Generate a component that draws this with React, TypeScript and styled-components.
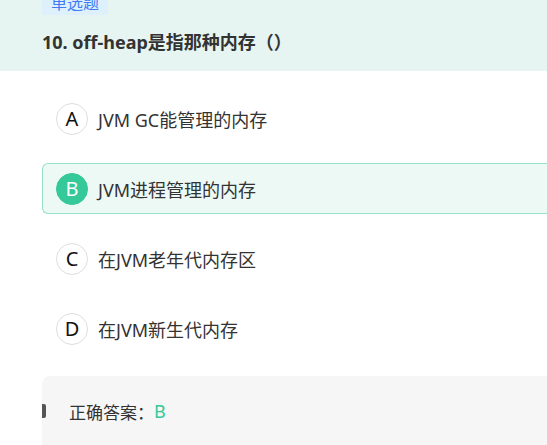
import React from "react";
import styled, { createGlobalStyle } from "styled-components";

const Global = createGlobalStyle`
  html, body { margin: 0; padding: 0; background: #fff; overflow: hidden; }
  body { font-family: "Noto Sans", "Noto Sans CJK SC", sans-serif; color: #333; }
`;

const Page = styled.div`
  width: 620px;
  height: 445px;
  overflow: hidden;
  display: flex;
  flex-direction: column;
`;

const Header = styled.div`
  background: #e6f5f2;
  height: 71px;
  flex-shrink: 0;
  padding-left: 42px;
  display: flex;
  flex-direction: column;
  align-items: flex-start;
`;

const Tag = styled.span`
  margin-top: -9px;
  height: 24px;
  padding: 0 9px;
  background: #def0fb;
  color: #3e7bf5;
  font-size: 16px;
  line-height: 24px;
  border-radius: 3px;
`;

const Title = styled.h2`
  margin: 15px 0 0;
  font-size: 18px;
  font-weight: 700;
  line-height: 24px;
  color: #333;
`;

const Options = styled.div`
  display: flex;
  flex-direction: column;
  gap: 19px;
  padding: 22px 0 0 42px;
`;

const Option = styled.div<{ $selected?: boolean }>`
  height: 51px;
  box-sizing: border-box;
  display: flex;
  align-items: center;
  padding-left: 13px;
  border: 1px solid ${(p) => (p.$selected ? "#98e2c6" : "transparent")};
  border-right: none;
  background: ${(p) => (p.$selected ? "#edf9f5" : "transparent")};
  border-radius: 6px 0 0 6px;
`;

const Letter = styled.span<{ $selected?: boolean }>`
  width: 32px;
  height: 32px;
  box-sizing: border-box;
  border-radius: 50%;
  display: flex;
  align-items: center;
  justify-content: center;
  font-size: 20px;
  color: ${(p) => (p.$selected ? "#fff" : "#111")};
  background: ${(p) => (p.$selected ? "#35c898" : "#fff")};
  border: 1px solid ${(p) => (p.$selected ? "#35c898" : "#dedede")};
`;

const OptionText = styled.span`
  margin-left: 10px;
  font-size: 18px;
  color: #333;
`;

const Answer = styled.div`
  margin: 22px 0 0 42px;
  height: 70px;
  flex-shrink: 0;
  background: #f6f6f6;
  border-radius: 8px 0 0 0;
  position: relative;
  display: flex;
  align-items: center;
  padding-left: 27px;
  font-size: 17px;
  color: #333;
`;

const Marker = styled.span`
  position: absolute;
  left: 0;
  top: 28px;
  width: 4px;
  height: 14px;
  background: #555;
  border-radius: 0 2px 2px 0;
`;

const Correct = styled.span`
  color: #35c898;
  font-size: 18px;
`;

const opts = [
  { k: "A", t: "JVM GC能管理的内存" },
  { k: "B", t: "JVM进程管理的内存", s: true },
  { k: "C", t: "在JVM老年代内存区" },
  { k: "D", t: "在JVM新生代内存" },
];

export default function App() {
  return (
    <>
      <Global />
      <Page>
        <Header>
          <Tag>单选题</Tag>
          <Title>10. off-heap是指那种内存（）</Title>
        </Header>
        <Options>
          {opts.map((o) => (
            <Option key={o.k} $selected={o.s}>
              <Letter $selected={o.s}>{o.k}</Letter>
              <OptionText>{o.t}</OptionText>
            </Option>
          ))}
        </Options>
        <Answer>
          <Marker />
          正确答案：<Correct>B</Correct>
        </Answer>
      </Page>
    </>
  );
}
